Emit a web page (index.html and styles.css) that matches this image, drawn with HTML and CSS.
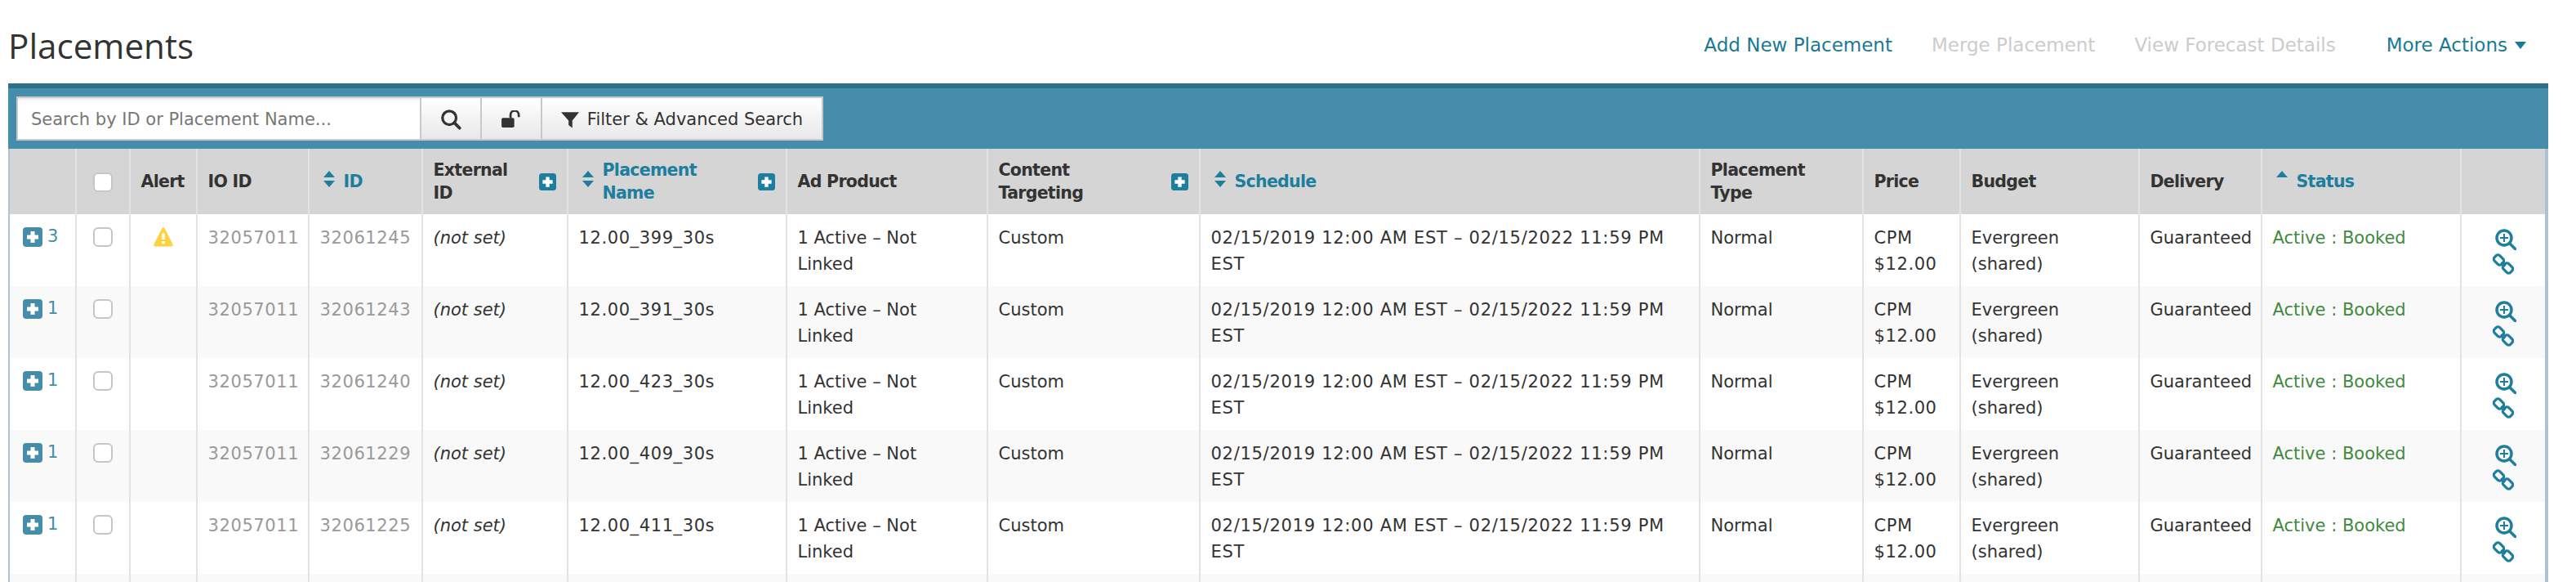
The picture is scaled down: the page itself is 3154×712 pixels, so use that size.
FILE: index.html
```html
<!DOCTYPE html>
<html lang="en">
<head>
<meta charset="utf-8">
<title>Placements</title>
<link rel="stylesheet" href="styles.css">
</head>
<body>
<svg class="defs" width="0" height="0" aria-hidden="true">
  <symbol id="plus" viewBox="0 0 24 24"><rect width="24" height="24" rx="4" fill="currentColor"/><path d="M12 5v14M5 12h14" stroke="#fff" stroke-width="5"/></symbol>
  <symbol id="both" viewBox="0 0 16 20"><path d="M8 0l7 8H1zM8 20l7-8H1z" fill="currentColor"/></symbol>
  <symbol id="up" viewBox="0 0 16 20"><path d="M8 0l7 8H1z" fill="currentColor"/></symbol>
  <symbol id="warn" viewBox="0 0 24 24"><path d="M12 .5c1 0 1.500.6 2 1.500l9.500 19c.8 1.500 0 2.500-1.500 2.500H2c-1.500 0-2.300-1-1.500-2.500L10 2c.5-.9 1-1.500 2-1.500z" fill="#ffd23f"/><path d="M10.300 7.500h3.400v7.500h-3.400zM10.300 17h3.400v3.200h-3.400z" fill="#fff"/></symbol>
  <symbol id="zoomin" viewBox="0 0 26 26"><circle cx="11" cy="11" r="9" fill="none" stroke="currentColor" stroke-width="3.500"/><path d="M18 18l6.500 6.500" stroke="currentColor" stroke-width="3.500" stroke-linecap="round"/><path d="M11 6v10M6 11h10" stroke="currentColor" stroke-width="2"/></symbol>
  <symbol id="chain" viewBox="0 0 26 26"><g fill="none" stroke="currentColor" stroke-width="3.200"><rect x="1.500" y="3.500" width="12" height="9" rx="3" transform="rotate(45 7.500 8)"/><rect x="12.500" y="13.500" width="12" height="9" rx="3" transform="rotate(45 18.500 18)"/></g><path d="M10.500 11l5 4.500" stroke="currentColor" stroke-width="3.200"/></symbol>
</svg>
<div class="page">
  <header class="topbar">
    <h1 class="title">Placements</h1>
    <nav class="actions">
      <a class="act">Add New Placement</a>
      <a class="act off">Merge Placement</a>
      <a class="act off">View Forecast Details</a>
      <a class="act more">More Actions<span class="caret"></span></a>
    </nav>
  </header>
  <section class="panel">
    <div class="toolbar">
      <div class="searchgroup">
        <div class="searchinput">Search by ID or Placement Name...</div>
        <button class="tbtn icon"><svg width="26" height="26" viewBox="0 0 28 28"><circle cx="12" cy="12" r="9" fill="none" stroke="#333" stroke-width="3.500"/><path d="M18.500 18.500l7 7" stroke="#333" stroke-width="4" stroke-linecap="round"/></svg></button>
        <button class="tbtn icon"><svg width="26" height="22" viewBox="0 0 28 24"><rect x="1" y="10" width="17" height="13" rx="2" fill="#333"/><path d="M13 10V6a5.500 5.500 0 0 1 11 0v3" fill="none" stroke="#333" stroke-width="3"/></svg></button>
        <button class="tbtn filter"><svg width="22" height="23" viewBox="0 0 24 24"><path d="M0 2h24l-9 11v10l-5-4v-6z" fill="#333"/></svg>Filter &amp; Advanced Search</button>
      </div>
    </div>
    <table class="grid">
      <colgroup>
        <col class="c1"><col class="c2"><col class="c3"><col class="c4"><col class="c5"><col class="c6"><col class="c7"><col class="c8"><col class="c9"><col class="c10"><col class="c11"><col class="c12"><col class="c13"><col class="c14"><col class="c15"><col class="c16">
      </colgroup>
      <thead>
        <tr>
          <th></th>
          <th class="center"><span class="check"></span></th>
          <th>Alert</th>
          <th>IO ID</th>
          <th><span class="sort"><svg class="sorticon"><use href="#both"/></svg>ID</span></th>
          <th><div class="split"><span class="stack">External ID</span><svg class="hplus"><use href="#plus"/></svg></div></th>
          <th><div class="split"><span class="sort"><svg class="sorticon"><use href="#both"/></svg><span class="stack">Placement Name</span></span><svg class="hplus"><use href="#plus"/></svg></div></th>
          <th>Ad Product</th>
          <th><div class="split"><span class="stack">Content Targeting</span><svg class="hplus"><use href="#plus"/></svg></div></th>
          <th><span class="sort"><svg class="sorticon"><use href="#both"/></svg>Schedule</span></th>
          <th><span class="stack stackblock">Placement Type</span></th>
          <th>Price</th>
          <th>Budget</th>
          <th>Delivery</th>
          <th><span class="sort"><svg class="sorticon"><use href="#up"/></svg>Status</span></th>
          <th></th>
        </tr>
      </thead>
      <tbody>
        <tr>
          <td class="expand"><svg class="rplus"><use href="#plus"/></svg><span class="count">3</span></td>
          <td class="center"><span class="check"></span></td>
          <td class="center"><svg class="warn"><use href="#warn"/></svg></td>
          <td class="muted num">32057011</td><td class="muted num">32061245</td><td><em>(not set)</em></td><td class="num">12.00_399_30s</td>
          <td class="adprod">1 Active – Not Linked</td><td>Custom</td><td class="sched">02/15/2019 12:00 AM EST – 02/15/2022 11:59 PM EST</td><td>Normal</td><td class="num">CPM $12.00</td><td>Evergreen (shared)</td><td>Guaranteed</td><td class="ok">Active : Booked</td>
          <td class="tools"><svg class="tool"><use href="#zoomin"/></svg><svg class="tool link"><use href="#chain"/></svg></td>
        </tr>
        <tr>
          <td class="expand"><svg class="rplus"><use href="#plus"/></svg><span class="count">1</span></td>
          <td class="center"><span class="check"></span></td>
          <td></td>
          <td class="muted num">32057011</td><td class="muted num">32061243</td><td><em>(not set)</em></td><td class="num">12.00_391_30s</td>
          <td class="adprod">1 Active – Not Linked</td><td>Custom</td><td class="sched">02/15/2019 12:00 AM EST – 02/15/2022 11:59 PM EST</td><td>Normal</td><td class="num">CPM $12.00</td><td>Evergreen (shared)</td><td>Guaranteed</td><td class="ok">Active : Booked</td>
          <td class="tools"><svg class="tool"><use href="#zoomin"/></svg><svg class="tool link"><use href="#chain"/></svg></td>
        </tr>
        <tr>
          <td class="expand"><svg class="rplus"><use href="#plus"/></svg><span class="count">1</span></td>
          <td class="center"><span class="check"></span></td>
          <td></td>
          <td class="muted num">32057011</td><td class="muted num">32061240</td><td><em>(not set)</em></td><td class="num">12.00_423_30s</td>
          <td class="adprod">1 Active – Not Linked</td><td>Custom</td><td class="sched">02/15/2019 12:00 AM EST – 02/15/2022 11:59 PM EST</td><td>Normal</td><td class="num">CPM $12.00</td><td>Evergreen (shared)</td><td>Guaranteed</td><td class="ok">Active : Booked</td>
          <td class="tools"><svg class="tool"><use href="#zoomin"/></svg><svg class="tool link"><use href="#chain"/></svg></td>
        </tr>
        <tr>
          <td class="expand"><svg class="rplus"><use href="#plus"/></svg><span class="count">1</span></td>
          <td class="center"><span class="check"></span></td>
          <td></td>
          <td class="muted num">32057011</td><td class="muted num">32061229</td><td><em>(not set)</em></td><td class="num">12.00_409_30s</td>
          <td class="adprod">1 Active – Not Linked</td><td>Custom</td><td class="sched">02/15/2019 12:00 AM EST – 02/15/2022 11:59 PM EST</td><td>Normal</td><td class="num">CPM $12.00</td><td>Evergreen (shared)</td><td>Guaranteed</td><td class="ok">Active : Booked</td>
          <td class="tools"><svg class="tool"><use href="#zoomin"/></svg><svg class="tool link"><use href="#chain"/></svg></td>
        </tr>
        <tr>
          <td class="expand"><svg class="rplus"><use href="#plus"/></svg><span class="count">1</span></td>
          <td class="center"><span class="check"></span></td>
          <td></td>
          <td class="muted num">32057011</td><td class="muted num">32061225</td><td><em>(not set)</em></td><td class="num">12.00_411_30s</td>
          <td class="adprod">1 Active – Not Linked</td><td>Custom</td><td class="sched">02/15/2019 12:00 AM EST – 02/15/2022 11:59 PM EST</td><td>Normal</td><td class="num">CPM $12.00</td><td>Evergreen (shared)</td><td>Guaranteed</td><td class="ok">Active : Booked</td>
          <td class="tools"><svg class="tool"><use href="#zoomin"/></svg><svg class="tool link"><use href="#chain"/></svg></td>
        </tr>
        <tr class="partial">
          <td></td><td></td><td></td><td></td><td></td><td></td><td></td><td></td><td></td><td></td><td></td><td></td><td></td><td></td><td></td><td></td>
        </tr>
      </tbody>
    </table>
  </section>
</div>
</body>
</html>
```
FILE: styles.css
```css
* { box-sizing: border-box; }
html, body { margin: 0; padding: 0; height: 712px; overflow: hidden; background: #fff; }
body { font-family: "DejaVu Sans", sans-serif; font-size: 21px; color: #333; }
.defs { position: absolute; }
.page { width: 3120px; padding-left: 10px; }
.topbar { height: 102px; display: flex; justify-content: space-between; align-items: flex-start; }
.title { margin: 30px 0 0; font-family: "Open Sans", sans-serif; font-size: 42.2px; line-height: 52px; font-weight: 400; color: #333; }
.actions { display: flex; gap: 48px; padding: 38px 27px 0 0; line-height: 34px; font-size: 23px; }
.act { color: #1a7a96; white-space: nowrap; }
.act.off { color: #ccc; }
.act.more { margin-left: 14px; }
.caret { display: inline-block; margin-left: 9px; vertical-align: 3px; border: 7px solid transparent; border-top: 9px solid #1a7a96; border-bottom: 0; }
.panel { border-top: 6px solid #2f6f89; }
.toolbar { height: 74px; background: #468dab; padding: 10px 10px; }
.searchgroup { display: flex; width: 988px; height: 54px; border: 2px solid #c9c9c9; background: #fff; }
.searchinput { width: 492px; padding-left: 16px; line-height: 52px; color: #777; background: #fff; box-shadow: inset 0 4px 4px -3px #ddd; }
.tbtn { margin: 0; padding: 2px 0 0; border: 0; border-left: 2px solid #c9c9c9; height: 50px; font: inherit; line-height: 48px; color: #333; background: linear-gradient(#fff, #e8e8e8); display: flex; align-items: center; justify-content: center; }
.tbtn.icon { width: 74px; }
.tbtn.filter { flex: 1; gap: 10px; }
.grid { width: 3110px; table-layout: fixed; border-collapse: separate; border-spacing: 0; border-left: 2px solid #b0c2d2; border-right: 4px solid #b0c2d2; }
.c1 { width: 82px; } .c2 { width: 66px; } .c3 { width: 82px; } .c4 { width: 137px; }
.c5 { width: 139px; } .c6 { width: 178px; } .c7 { width: 268px; } .c8 { width: 246px; }
.c9 { width: 260px; } .c10 { width: 612px; } .c11 { width: 200px; } .c12 { width: 119px; }
.c13 { width: 219px; } .c14 { width: 150px; } .c15 { width: 244px; } .c16 { width: 102px; }
th, td { border-right: 2px solid #e3e3e3; padding: 13px 10px 11px 12.5px; }
th:last-child, td:last-child { border-right: 0; }
th { height: 80px; padding-top: 0; padding-bottom: 0; background: #d5d5d5; font-size: 20.5px; letter-spacing: -.7px; font-weight: 700; line-height: 28px; text-align: left; vertical-align: middle; }
td { height: 88px; line-height: 32px; vertical-align: top; color: #333; }
tbody tr:nth-child(even) td { background: #f9f9f9; }
.num { letter-spacing: .6px; }
.sched { letter-spacing: .72px; }
.adprod { padding-right: 40px; }
.center { text-align: center; padding-left: 0; padding-right: 0; }
.check { display: inline-block; width: 24px; height: 24px; vertical-align: middle; border: 2px solid #c6c6c6; border-radius: 6px; background: #fff; }
td .check { vertical-align: top; margin-top: 3px; }
.muted { color: #999; }
.ok { color: #3f8a3f; }
em { font-style: italic; }
.split { display: flex; align-items: center; justify-content: space-between; }
.stack { width: min-content; }
.stackblock { display: block; }
.sort { display: flex; align-items: center; gap: 10px; margin-left: 3px; color: #1d7e9e; }
.sorticon { flex: none; width: 16px; height: 20px; margin-top: -6px; color: #1d7e9e; }
.hplus { flex: none; width: 21px; height: 21px; color: #1d7e9e; margin-right: 3px; }
.expand { padding-left: 16px; padding-right: 0; white-space: nowrap; }
.rplus { width: 24px; height: 24px; color: #468dab; vertical-align: top; margin-top: 3px; }
.count { color: #468dab; margin-left: 6px; vertical-align: top; position: relative; top: -2px; }
.warn { width: 24px; height: 24px; vertical-align: top; margin-top: 3px; }
.tools { padding: 18px 0 0 41px; }
.tool { display: block; width: 26px; height: 26px; color: #1d7e9e; margin-bottom: 4px; }
.tool.link { margin-left: -3px; }
.partial td { height: 10px; padding: 0; }
```
